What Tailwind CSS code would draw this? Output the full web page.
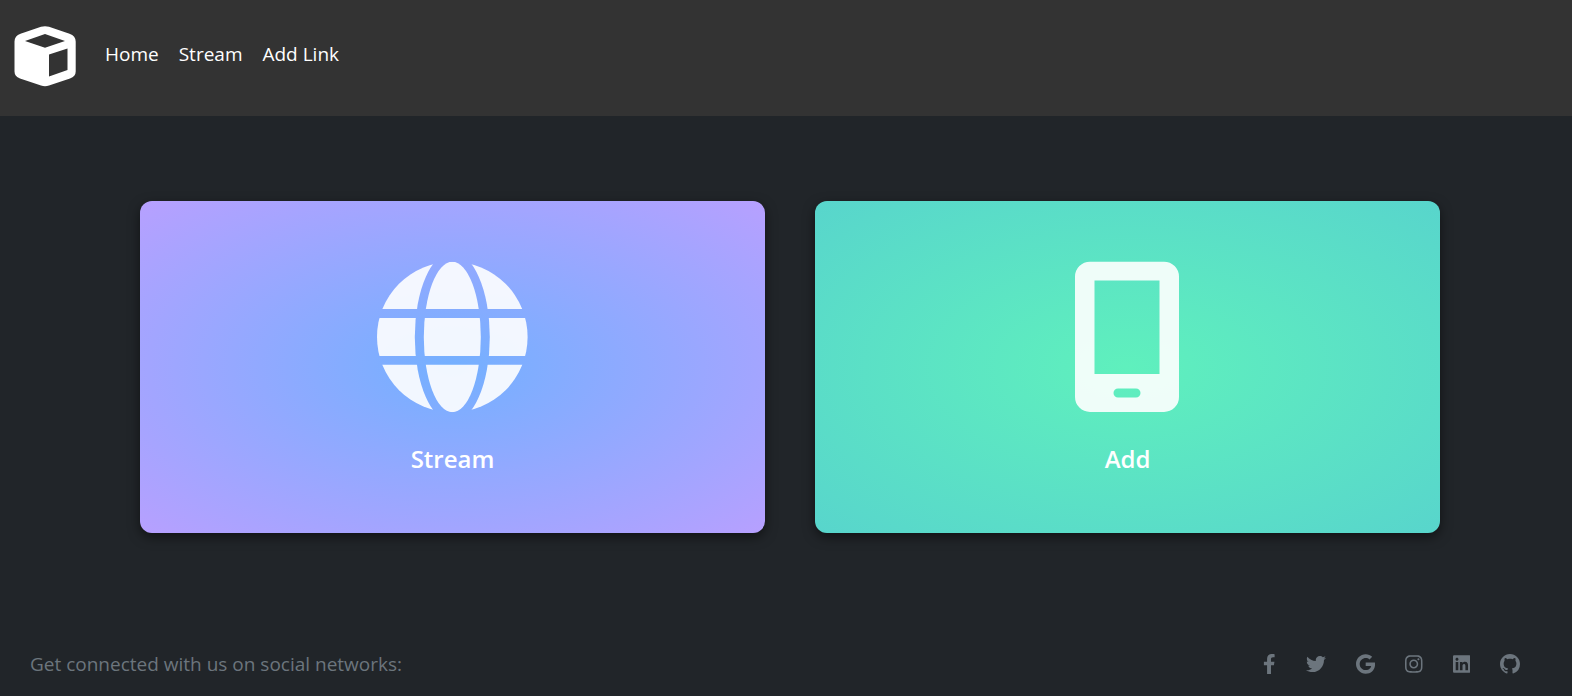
<!DOCTYPE html>
<html lang="en">
<head>
<meta charset="utf-8">
<meta name="viewport" content="width=device-width, initial-scale=1">
<title>Home</title>
<script src="https://cdn.jsdelivr.net/npm/@tailwindcss/browser@4"></script>
</head>
<body class="flex min-h-screen flex-col bg-[#212529] font-['Segoe_UI','Open_Sans',sans-serif]">
<header class="flex h-[116px] items-center bg-[#333333] pb-1 pl-[14px]">
  <a href="#" aria-label="Start page">
    <svg class="h-[62px] w-[62px]" viewBox="14 25.5 62 62" fill="#fff" fill-rule="evenodd">
      <path d="M41 27.3Q45 26 49 27.3L69.5 34.2Q75.7 36.5 75.7 42V72Q75.7 77 70 79L49 86Q45 87.5 41 86L20 79Q14.5 77 14.5 72V42Q14.5 36.500 20.5 34.2ZM25 41.5L45 48.2L65 41.5L45 34.5ZM49 55V77L67.5 70.5V49Z"/>
    </svg>
  </a>
  <nav class="mb-1 ml-[29px] flex gap-5 text-[19px] leading-7 text-white">
    <a href="#">Home</a>
    <a href="#">Stream</a>
    <a href="#">Add Link</a>
  </nav>
</header>
<main class="flex grow items-start gap-[50px] pt-[85px] pr-[132px] pl-[140px]">
  <a href="#" class="flex flex-1 flex-col items-center rounded-xl bg-[radial-gradient(#74b0ff,#b7a0ff)] pt-[60px] pb-14 text-white shadow-[0_4px_12px_rgba(0,0,0,0.5)]">
    <svg class="h-[152px] w-[152px]" viewBox="0 0 152 152" fill="#fff">
      <defs>
        <mask id="lines">
          <rect width="152" height="152" fill="#fff"/>
          <ellipse cx="75.3" cy="76" rx="37.5" ry="85" fill="#000"/>
          <ellipse cx="75.3" cy="76" rx="28.5" ry="75.3" fill="#fff"/>
          <path d="M0 48h152v9H0zM0 95h152v8.7H0z" fill="#000"/>
        </mask>
      </defs>
      <circle cx="75.3" cy="76" r="75.3" fill-opacity=".9" mask="url(#lines)"/>
    </svg>
    <span class="mt-7 text-2xl leading-9 font-semibold">Stream</span>
  </a>
  <a href="#" class="flex flex-1 flex-col items-center rounded-xl bg-[radial-gradient(#5ff0bd,#58d5cc)] pt-[60px] pb-14 text-white shadow-[0_4px_12px_rgba(0,0,0,0.5)]">
    <svg class="h-[152px] w-[106px]" viewBox="0 0 106 152" fill="#fff" fill-opacity=".9" fill-rule="evenodd">
      <path d="M15 .7H89A15 15 0 0 1 104 15.7V136A15 15 0 0 1 89 151H15A15 15 0 0 1 0 136V15.7A15 15 0 0 1 15 .7ZM19.5 19.5V113H84.5V19.5ZM43 127.5a4.5 4.5 0 0 0 0 9H61a4.5 4.5 0 0 0 0-9Z"/>
    </svg>
    <span class="mt-7 text-2xl leading-9 font-semibold">Add</span>
  </a>
</main>
<footer class="flex items-center justify-between pr-[52px] pb-[18px] pl-[30px] text-[#6c757d]">
  <span class="text-[19px] leading-7">Get connected with us on social networks:</span>
  <div class="flex items-center gap-[30px] fill-current">
    <a href="#" aria-label="Facebook"><svg class="h-5" viewBox="0 0 320 512"><path d="M279.140 288l14.220-92.660h-88.910v-60.130c0-25.350 12.420-50.060 52.240-50.060h40.420V6.260S260.430 0 225.360 0c-73.220 0-121.080 44.380-121.080 124.720v70.620H22.890V288h81.390v224h100.170V288z"/></svg></a>
    <a href="#" aria-label="Twitter"><svg class="h-5" viewBox="0 0 512 512"><path d="M459.370 151.716c.325 4.548.325 9.097.325 13.645 0 138.720-105.583 298.558-298.558 298.558-59.452 0-114.680-17.219-161.137-47.106 8.447.974 16.568 1.299 25.340 1.299 49.055 0 94.213-16.568 130.274-44.832-46.132-.975-84.792-31.188-98.112-72.772 6.498.974 12.995 1.624 19.818 1.624 9.421 0 18.843-1.300 27.614-3.573-48.081-9.747-84.143-51.980-84.143-102.985v-1.299c13.969 7.797 30.214 12.670 47.431 13.319-28.264-18.843-46.781-51.005-46.781-87.391 0-19.492 5.197-37.360 14.294-52.954 51.655 63.675 129.300 105.258 216.365 109.807-1.624-7.797-2.599-15.918-2.599-24.040 0-57.828 46.782-104.934 104.934-104.934 30.213 0 57.502 12.670 76.670 33.137 23.715-4.548 46.456-13.320 66.599-25.340-7.798 24.366-24.366 44.833-46.132 57.827 21.117-2.273 41.584-8.122 60.426-16.243-14.292 20.791-32.161 39.308-52.628 54.253z"/></svg></a>
    <a href="#" aria-label="Google"><svg class="h-5" viewBox="0 0 488 512"><path d="M488 261.800C488 403.300 391.100 504 248 504 110.800 504 0 393.200 0 256S110.800 8 248 8c66.800 0 123 24.500 166.300 64.900l-67.500 64.900C258.500 52.600 94.300 116.600 94.300 256c0 86.500 69.100 156.600 153.700 156.600 98.200 0 135-70.400 140.800-106.900H248v-85.300h236.100c2.300 12.700 3.900 24.900 3.900 41.400z"/></svg></a>
    <a href="#" aria-label="Instagram"><svg class="h-5" viewBox="0 0 448 512"><path d="M224.100 141c-63.600 0-114.900 51.300-114.900 114.900s51.300 114.900 114.900 114.900S339 319.500 339 255.900 287.700 141 224.100 141zm0 189.600c-41.100 0-74.700-33.500-74.700-74.700s33.500-74.700 74.700-74.700 74.700 33.500 74.700 74.700-33.600 74.700-74.700 74.700zm146.400-194.300c0 14.900-12 26.800-26.800 26.800-14.900 0-26.800-12-26.800-26.800s12-26.800 26.800-26.800 26.800 12 26.800 26.800zm76.100 27.200c-1.700-35.900-9.900-67.700-36.200-93.900-26.200-26.200-58-34.400-93.900-36.200-37-2.100-147.900-2.100-184.900 0-35.800 1.700-67.600 9.900-93.900 36.100s-34.400 58-36.200 93.900c-2.100 37-2.100 147.900 0 184.900 1.700 35.900 9.900 67.700 36.200 93.900s58 34.400 93.900 36.200c37 2.100 147.900 2.100 184.900 0 35.900-1.700 67.700-9.900 93.900-36.200 26.200-26.200 34.400-58 36.200-93.900 2.100-37 2.100-147.800 0-184.800zM398.800 388c-7.800 19.600-22.900 34.700-42.600 42.600-29.500 11.700-99.500 9-132.100 9s-102.700 2.600-132.100-9c-19.600-7.800-34.700-22.900-42.600-42.600-11.700-29.500-9-99.500-9-132.100s-2.600-102.700 9-132.100c7.800-19.600 22.900-34.700 42.600-42.600 29.500-11.700 99.500-9 132.100-9s102.700-2.600 132.100 9c19.600 7.800 34.700 22.900 42.600 42.600 11.700 29.500 9 99.500 9 132.100s2.700 102.700-9 132.100z"/></svg></a>
    <a href="#" aria-label="LinkedIn"><svg class="h-5" viewBox="0 0 448 512"><path d="M416 32H31.900C14.300 32 0 46.500 0 64.300v383.400C0 465.500 14.300 480 31.900 480H416c17.600 0 32-14.500 32-32.300V64.300c0-17.800-14.400-32.300-32-32.300zM135.400 416H69V202.200h66.500V416zm-33.200-243c-21.300 0-38.500-17.300-38.500-38.500S80.900 96 102.200 96c21.200 0 38.500 17.300 38.500 38.500 0 21.300-17.200 38.500-38.500 38.500zm282.100 243h-66.400V312c0-24.800-.5-56.700-34.500-56.700-34.600 0-39.900 27-39.900 54.900V416h-66.400V202.200h63.700v29.200h.9c8.900-16.800 30.600-34.500 62.900-34.500 67.200 0 79.700 44.300 79.700 101.900V416z"/></svg></a>
    <a href="#" aria-label="GitHub"><svg class="h-5" viewBox="0 0 16 16"><path d="M8 0C3.580 0 0 3.580 0 8c0 3.540 2.290 6.530 5.470 7.590.4.07.55-.17.55-.38 0-.19-.01-.82-.01-1.490-2.010.37-2.530-.49-2.690-.94-.09-.23-.48-.94-.82-1.130-.28-.15-.68-.52-.01-.53.63-.01 1.080.58 1.230.82.72 1.210 1.870.87 2.330.66.07-.52.28-.87.51-1.070-1.780-.2-3.640-.89-3.640-3.950 0-.87.31-1.590.82-2.150-.08-.2-.36-1.020.08-2.120 0 0 .67-.21 2.200.82.64-.18 1.320-.27 2-.27s1.360.09 2 .27c1.530-1.040 2.200-.82 2.200-.82.44 1.100.16 1.920.08 2.120.51.56.82 1.270.82 2.150 0 3.070-1.870 3.750-3.650 3.950.29.25.54.73.54 1.480 0 1.070-.01 1.930-.01 2.200 0 .21.15.46.55.38A8.010 8.010 0 0 0 16 8c0-4.420-3.580-8-8-8z"/></svg></a>
  </div>
</footer>
</body>
</html>
